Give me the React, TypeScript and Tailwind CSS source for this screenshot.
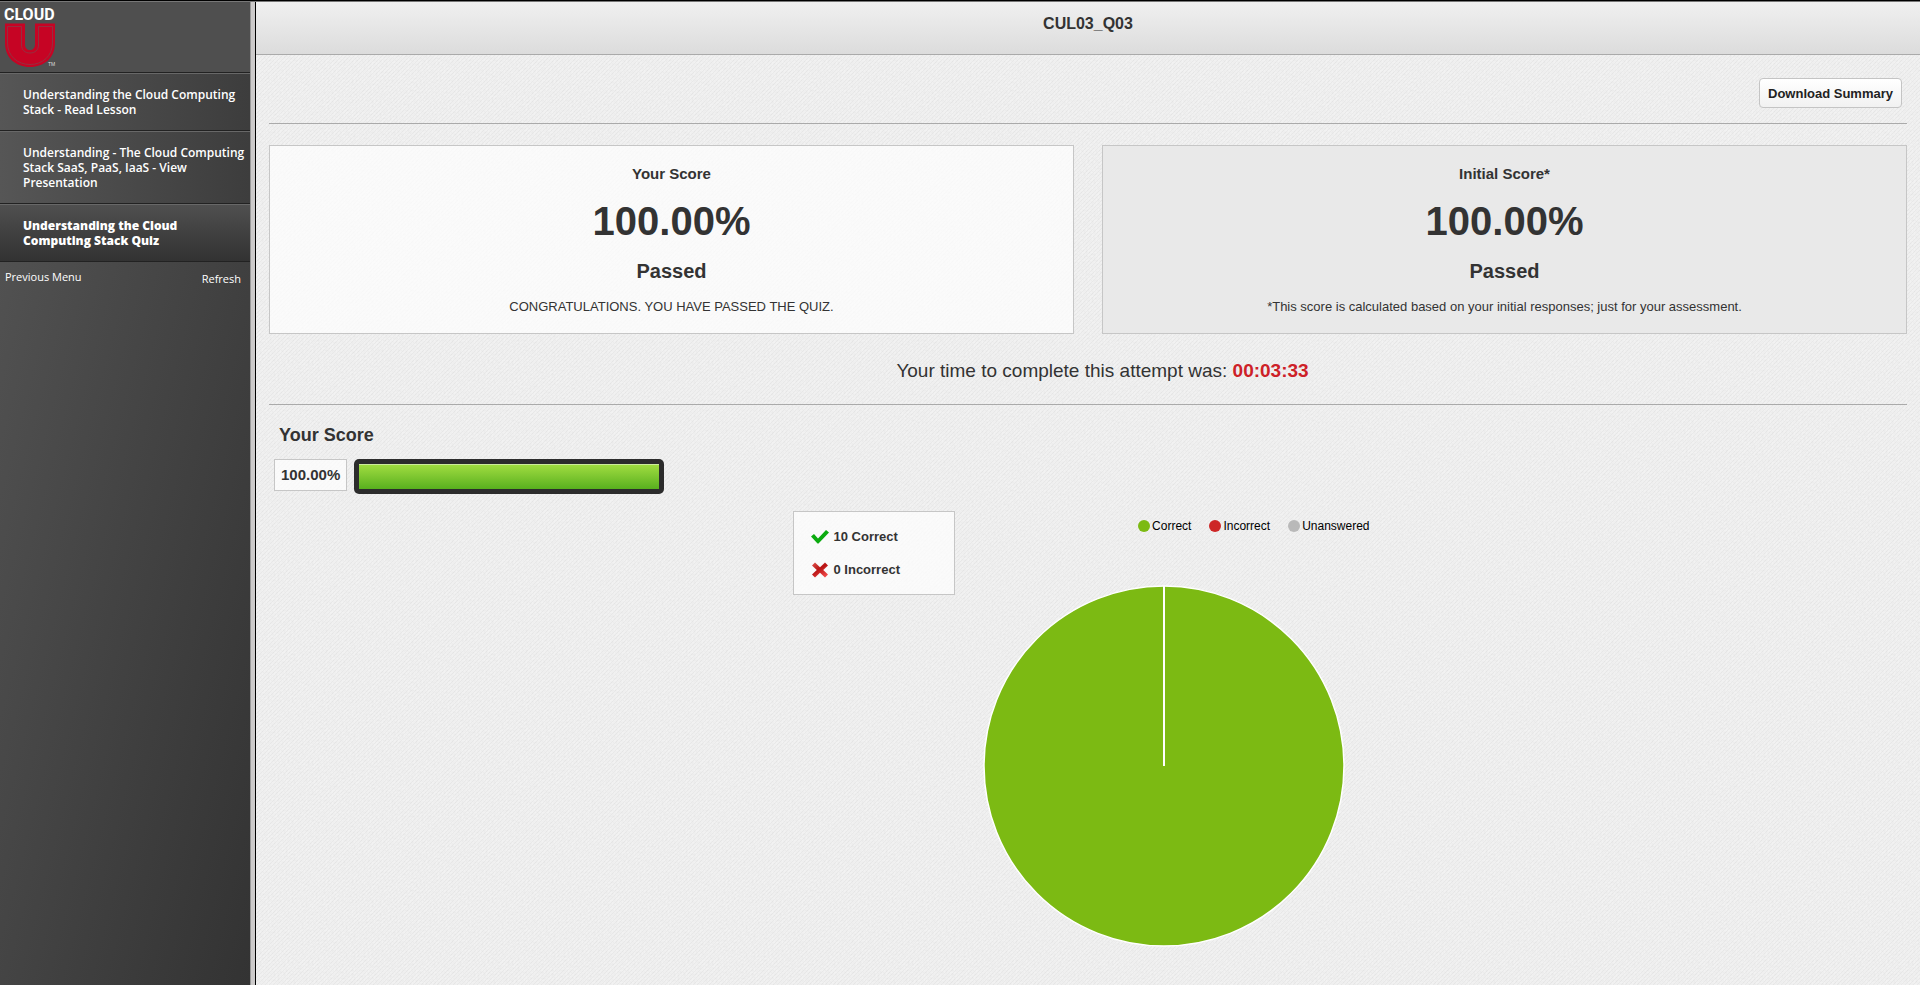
import React from "react";

const lessons = [
  { title: "Understanding the Cloud Computing Stack - Read Lesson", active: false },
  { title: "Understanding - The Cloud Computing Stack SaaS, PaaS, IaaS - View Presentation", active: false },
  { title: "Understanding the Cloud Computing Stack Quiz", active: true },
];

const legend = [
  { label: "Correct", dot: "bg-[#7cba13]" },
  { label: "Incorrect", dot: "bg-[#cd2626]" },
  { label: "Unanswered", dot: "bg-[#b9b9b9]" },
];

function Logo() {
  return (
    <a href="#home" aria-label="Cloud U" className="block w-16">
      <svg viewBox="0 0 64 68" className="block h-[68px] w-16">
        <text x="4" y="18" fontFamily="Roboto, sans-serif" fontSize="16" fontWeight="700" fill="#fff">CLOUD</text>
        <path d="M5 21.500H25V42.500C25 46 27 48 30 48S35 46 35 42.500V21.500H55V41C55 56 44 65 30 65S5 56 5 41Z" fill="#c60424" />
        <path d="M7.500 24.500H21.500V43C21.500 48 25 51 30 51S38.500 48 38.500 43V24.500H52.500V41C52.500 54 42.500 62.500 30 62.500S7.500 54 7.500 41Z" fill="none" stroke="#8a3a46" strokeWidth="0.8" />
        <text x="48" y="64" fontFamily="Liberation Sans, sans-serif" fontSize="5" fill="#ddd">TM</text>
      </svg>
    </a>
  );
}

function Texture() {
  return (
    <svg aria-hidden="true" className="pointer-events-none absolute inset-0 h-full w-full">
      <defs>
        <filter id="grain" x="0" y="0" width="100%" height="100%">
          <feTurbulence type="fractalNoise" baseFrequency="0.5 0.5" numOctaves="2" seed="4" stitchTiles="stitch" />
          <feColorMatrix values="0 0 0 0 0.4  0 0 0 0 0.4  0 0 0 0 0.4  0.22 0 0 0 -0.08" />
        </filter>
        <pattern id="paper" width="200" height="200" patternUnits="userSpaceOnUse">
          <rect width="200" height="200" filter="url(#grain)" />
        </pattern>
        <pattern id="weave" width="4" height="4" patternUnits="userSpaceOnUse">
          <path d="M-1 5L5 -1M-1 1L1 -1M3 5L5 3" stroke="#000" strokeOpacity="0.035" strokeWidth="1" />
        </pattern>
      </defs>
      <rect width="100%" height="100%" fill="url(#paper)" />
      <rect width="100%" height="100%" fill="url(#weave)" />
    </svg>
  );
}

function ScoreCard({ title, note, className }: { title: string; note: string; className: string }) {
  return (
    <section className={`flex flex-col items-center border border-[#c6c6c6] pt-5 pb-[18px] text-center text-[#333] ${className}`}>
      <h2 className="text-[15px] leading-4 font-bold">{title}</h2>
      <p className="pt-4 text-[40px] leading-[46px] font-bold">100.00%</p>
      <p className="pt-[15px] text-xl leading-6 font-bold">Passed</p>
      <p className="pt-4 text-[13px] leading-4">{note}</p>
    </section>
  );
}

export default function App() {
  return (
    <div className="flex min-h-screen flex-col border-t border-black bg-[#f2f2f2] font-['Liberation_Sans',Arial,sans-serif]">
      <div className="flex flex-1 border-t border-[#777]">
        <aside className="w-[250px] shrink-0 bg-linear-to-br from-[#565656] to-[#333] font-['Open_Sans','Noto_Sans',sans-serif] text-white">
          <div className="h-[70px] bg-[#4f4f4f]">
            <Logo />
          </div>
          <nav>
            {lessons.map((l) => (
              <a
                key={l.title}
                href="#lesson"
                className={`block border-t border-[#222] text-xs leading-[15px] ${l.active ? "bg-linear-to-b from-[#505050] to-[#323232] font-extrabold" : "bg-linear-to-r from-[#565656] to-[#3d3d3d] font-semibold"}`}
              >
                <span className={`block border-t border-[#686868] py-[13px] pl-[23px] ${l.active ? "pr-8" : "pr-1"}`}>{l.title}</span>
              </a>
            ))}
          </nav>
          <div className="flex justify-between border-t border-[#222] px-[5px] pt-[7px] text-[11px] leading-4 font-medium">
            <a href="#menu">Previous Menu</a>
            <a href="#refresh" className="pt-[2px] pr-1">Refresh</a>
          </div>
        </aside>
        <div className="w-[6px] shrink-0 border-r border-l border-r-black border-l-[#999] bg-[#cccaca]" />

        <div className="relative min-w-0 flex-1">
          <Texture />
          <div className="relative">
            <header className="border-b border-[#aaa] bg-linear-to-b from-[#f0f0f0] to-[#dcdcdc] pt-3 pb-[21px] text-center">
              <h1 className="text-base leading-[19px] font-bold text-[#333]">CUL03_Q03</h1>
            </header>
            <main className="px-[13px]">
              <div className="flex justify-end border-b border-[#aaa] pt-[23px] pr-[5px] pb-[15px]">
                <button type="button" className="h-[30px] rounded border border-[#c4c4c4] bg-linear-to-b from-white to-[#f1f1f1] px-2 pt-px text-[13px] leading-4 font-bold text-[#222]">
                  Download Summary
                </button>
              </div>

              <div className="grid grid-cols-2 gap-7 pt-[21px]">
                <ScoreCard title="Your Score" note="CONGRATULATIONS. YOU HAVE PASSED THE QUIZ." className="bg-white/70" />
                <ScoreCard title="Initial Score*" note="*This score is calculated based on your initial responses; just for your assessment." className="bg-[#e9e9e9]" />
              </div>

              <p className="border-b border-[#aaa] pt-[25px] pb-[21px] pl-[29px] text-center text-[19px] leading-6 text-[#333]">
                Your time to complete this attempt was: <strong className="text-[#cd2128]">00:03:33</strong>
              </p>

              <h2 className="pt-[19px] pl-[10px] text-lg leading-[22px] font-bold text-[#333]">Your Score</h2>
              <div className="flex items-start gap-[7px] pt-[13px] pl-[5px]">
                <div className="border border-[#c6c6c6] bg-white/70 px-[6px] py-[6px] text-[15px] leading-[18px] font-bold text-[#333]">100.00%</div>
                <div className="w-[310px] rounded-[5px] bg-[#2c2c2c] p-[5px]">
                  <div className="h-[25px] w-full border-t border-[#cdec9c] bg-linear-to-b from-[#9fdc40] to-[#58b01e]" />
                </div>
              </div>

              <div className="flex items-start justify-center gap-7 pt-[17px] pr-[14px]">
                <ul className="w-[162px] space-y-[17px] border border-[#c6c6c6] bg-white/70 pt-[17px] pb-4 pl-4 text-[13px] leading-4 font-bold text-[#333]">
                  <li className="flex items-center gap-1">
                    <svg viewBox="0 0 20 16" className="h-4 w-5">
                      <path d="M1 7.500L4 5L8 9.500L16 1L19 3.500L8.500 14.500H7.500Z" fill="#0cab10" />
                    </svg>
                    10 Correct
                  </li>
                  <li className="flex items-center gap-1">
                    <svg viewBox="0 0 20 16" className="h-4 w-5">
                      <defs>
                        <linearGradient id="cross" x1="0" y1="0" x2="0.7" y2="1">
                          <stop offset="0" stopColor="#e05550" />
                          <stop offset="0.5" stopColor="#b81414" />
                          <stop offset="1" stopColor="#f04848" />
                        </linearGradient>
                      </defs>
                      <path d="M5 0.500L10 5.200L15 0.500L18 3.500L13.200 8L18 12.500L15 15.500L10 10.800L5 15.500L2 12.500L6.800 8L2 3.500Z" fill="url(#cross)" />
                    </svg>
                    0 Incorrect
                  </li>
                </ul>
                <figure className="flex w-[387px] flex-col pt-[7px]">
                  <figcaption className="flex gap-[18px] self-end text-xs leading-4 text-black">
                    {legend.map((l) => (
                      <span key={l.label} className="flex items-center gap-[2px]">
                        <span className={`size-3 rounded-full ${l.dot}`} />
                        {l.label}
                      </span>
                    ))}
                  </figcaption>
                  <svg viewBox="0 0 362 362" role="img" aria-label="All answers correct" className="mt-[51px] size-[362px]">
                    <circle cx="181" cy="181" r="180" fill="#7cba13" stroke="#fff" strokeWidth="1.500" />
                    <path d="M181 181V1" stroke="#fff" strokeWidth="2" />
                  </svg>
                </figure>
              </div>
            </main>
          </div>
        </div>
      </div>
    </div>
  );
}
